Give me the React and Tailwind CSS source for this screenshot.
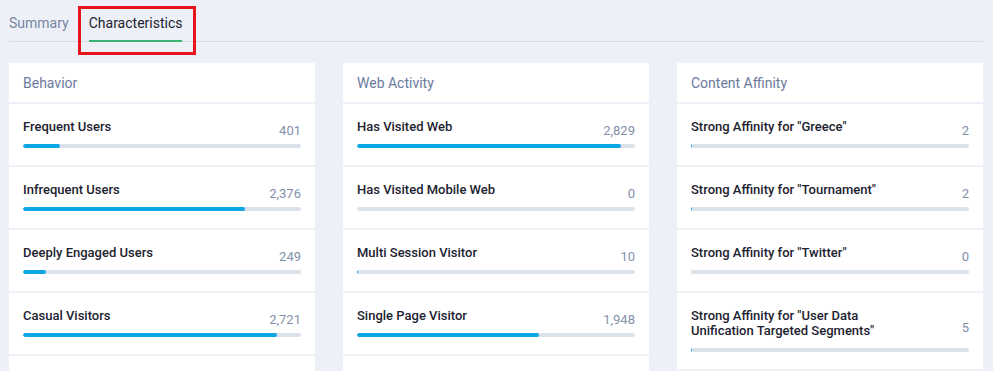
import React from "react";

const MAX = 2980;

const columns = [
  {
    title: "Behavior",
    rows: [
      ["Frequent Users", 401],
      ["Infrequent Users", 2376],
      ["Deeply Engaged Users", 249],
      ["Casual Visitors", 2721],
    ],
  },
  {
    title: "Web Activity",
    rows: [
      ["Has Visited Web", 2829],
      ["Has Visited Mobile Web", 0],
      ["Multi Session Visitor", 10],
      ["Single Page Visitor", 1948],
    ],
  },
  {
    title: "Content Affinity",
    rows: [
      ['Strong Affinity for "Greece"', 2],
      ['Strong Affinity for "Tournament"', 2],
      ['Strong Affinity for "Twitter"', 0],
      ['Strong Affinity for "User Data Unification Targeted Segments"', 5],
    ],
  },
];

function Row({ label, value }) {
  const pct = (value / MAX) * 100;
  return (
    <div className="bg-white px-[14px] pt-[15px] pb-[17px]">
      <div className="flex items-center justify-between">
        <div className="max-w-[210px] text-[13px] leading-[15px] font-medium text-[#1d2230]">
          {label}
        </div>
        <div className="translate-y-[4px] text-[13px] leading-[15px] text-[#8290aa]">
          {value.toLocaleString("en-US")}
        </div>
      </div>
      <div className="mt-[10px] h-[4px] w-full overflow-hidden rounded-full bg-[#dce2eb]">
        {value > 0 && (
          <div
            className="h-full rounded-full bg-[#0aa7e4]"
            style={{ width: `${pct}%` }}
          />
        )}
      </div>
    </div>
  );
}

function Card({ title, rows }) {
  return (
    <div className="flex flex-col gap-[2px] bg-[#eef1f7]">
      <div className="flex h-[39px] items-center bg-white px-[14px] pt-[1px] text-[14px] text-[#6b7a9c]">
        {title}
      </div>
      {rows.map(([l, v]) => (
        <Row key={l} label={l} value={v} />
      ))}
      <div className="h-[61px] bg-white" />
    </div>
  );
}

export default function App() {
  return (
    <div
      className="h-[371px] w-[993px] overflow-hidden bg-[#edf0f7] pl-[9px] pr-[10px]"
      style={{ fontFamily: "Roboto, 'Liberation Sans', sans-serif" }}
    >
      <div className="relative flex h-[42px] items-end gap-[20px] border-b border-[#d6dce7]">
        <div className="pb-[10px] text-[14px] leading-[16px] text-[#7886a3]">Summary</div>
        <div className="mb-[-1px] border-b-2 border-[#3cb371] pb-[9px] text-[14px] leading-[16px] text-[#1d2230]">
          Characteristics
        </div>
        <div className="pointer-events-none absolute left-[69px] top-[6px] h-[49px] w-[118px] border-[3px] border-[#e8141c]" />
      </div>
      <div className="mt-[21px] grid grid-cols-3 gap-[28px]">
        {columns.map((c) => (
          <Card key={c.title} title={c.title} rows={c.rows} />
        ))}
      </div>
    </div>
  );
}
